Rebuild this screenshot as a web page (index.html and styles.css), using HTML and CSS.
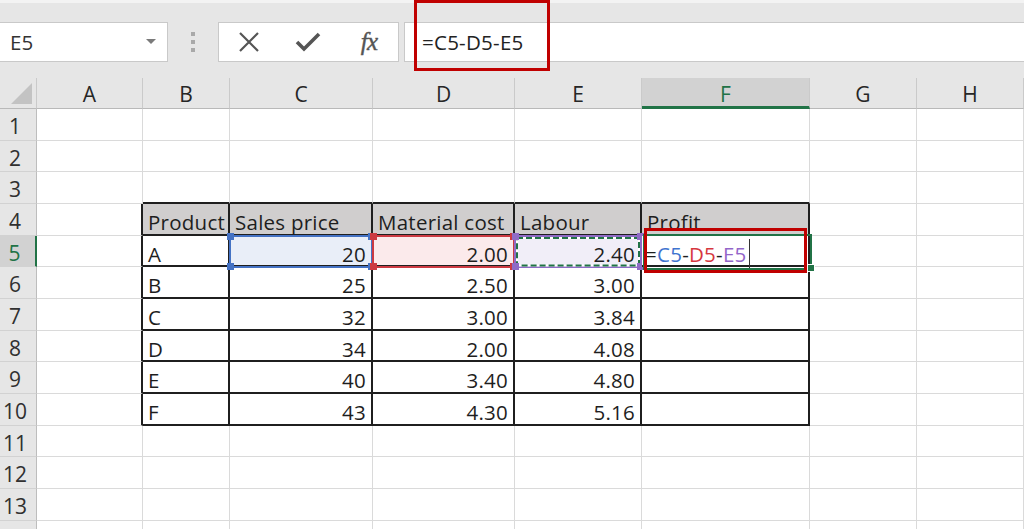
FILE: index.html
```html
<!DOCTYPE html>
<html lang="en">
<head>
<meta charset="utf-8">
<title>Excel formula</title>
<link rel="stylesheet" href="styles.css">
</head>
<body>
<div class="toolbar">
  <div class="namebox">
    <span>E5</span>
    <svg class="dd" width="10" height="6" viewBox="0 0 10 6"><polygon points="0,0 10,0 5,5" fill="#7a7a7a"/></svg>
  </div>
  <div class="grip"><i></i><i></i><i></i></div>
  <div class="fbtns">
    <span class="fb"><svg width="22" height="22" viewBox="0 0 22 22"><path d="M2 2 L20 20 M20 2 L2 20" stroke="#555555" stroke-width="2.2" fill="none"/></svg></span>
    <span class="fb"><svg width="26" height="20" viewBox="0 0 26 20"><path d="M2 10 L9 17 L24 2" stroke="#555555" stroke-width="3.6" fill="none"/></svg></span>
    <span class="fb fx">fx</span>
  </div>
  <div class="fbox">=C5-D5-E5</div>
  <div class="callout"></div>
</div>

<div class="sheet">
  <div class="ch corner"><svg width="36" height="30" viewBox="0 0 36 30"><polygon points="32,5 32,26 11,26" fill="#c3c3c3"/></svg></div>
  <div class="ch">A</div><div class="ch">B</div><div class="ch">C</div><div class="ch">D</div><div class="ch">E</div><div class="ch on">F</div><div class="ch">G</div><div class="ch">H</div>

  <div class="rh">1</div>
  <div class="c"></div><div class="c"></div><div class="c"></div><div class="c"></div><div class="c"></div><div class="c"></div><div class="c"></div><div class="c"></div>

  <div class="rh">2</div>
  <div class="c"></div><div class="c"></div><div class="c"></div><div class="c"></div><div class="c"></div><div class="c"></div><div class="c"></div><div class="c"></div>

  <div class="rh">3</div>
  <div class="c"></div><div class="c ta"></div><div class="c ta"></div><div class="c ta"></div><div class="c ta"></div><div class="c ta"></div><div class="c"></div><div class="c"></div>

  <div class="rh">4</div>
  <div class="c tl"></div>
  <div class="c tt hd">Product</div>
  <div class="c tt hd">Sales price</div>
  <div class="c tt hd">Material cost</div>
  <div class="c tt hd">Labour</div>
  <div class="c tt hd">Profit</div>
  <div class="c"></div><div class="c"></div>

  <div class="rh on">5</div>
  <div class="c tl"></div>
  <div class="c tt">A</div>
  <div class="c tt num sel sel-b">20<b class="ring"><i class="k k1"></i><i class="k k2"></i><i class="k k3"></i><i class="k k4"></i></b></div>
  <div class="c tt num sel sel-r">2.00<b class="ring"><i class="k k1"></i><i class="k k2"></i><i class="k k3"></i><i class="k k4"></i></b></div>
  <div class="c tt num sel sel-p">2.40<b class="ring"><svg class="ants" width="124" height="30" viewBox="0 0 124 30"><rect x="1" y="1" width="122" height="27.6" fill="none" stroke="#ffffff" stroke-width="2"/><rect x="1" y="1" width="122" height="27.6" fill="none" stroke="#217346" stroke-width="2" stroke-dasharray="6 3"/></svg><i class="k k1"></i><i class="k k2"></i><i class="k k3"></i><i class="k k4"></i></b></div>
  <div class="c tt active"><span>=</span><span class="rb">C5</span><span>-</span><span class="rr">D5</span><span>-</span><span class="rp">E5</span><span class="cursor"></span><b class="aring"></b><b class="fill"></b><b class="mark"></b></div>
  <div class="c"></div><div class="c"></div>

  <div class="rh">6</div>
  <div class="c tl"></div><div class="c tt">B</div><div class="c tt num">25</div><div class="c tt num">2.50</div><div class="c tt num">3.00</div><div class="c tt"></div><div class="c"></div><div class="c"></div>

  <div class="rh">7</div>
  <div class="c tl"></div><div class="c tt">C</div><div class="c tt num">32</div><div class="c tt num">3.00</div><div class="c tt num">3.84</div><div class="c tt"></div><div class="c"></div><div class="c"></div>

  <div class="rh">8</div>
  <div class="c tl"></div><div class="c tt">D</div><div class="c tt num">34</div><div class="c tt num">2.00</div><div class="c tt num">4.08</div><div class="c tt"></div><div class="c"></div><div class="c"></div>

  <div class="rh">9</div>
  <div class="c tl"></div><div class="c tt">E</div><div class="c tt num">40</div><div class="c tt num">3.40</div><div class="c tt num">4.80</div><div class="c tt"></div><div class="c"></div><div class="c"></div>

  <div class="rh">10</div>
  <div class="c tl"></div><div class="c tt">F</div><div class="c tt num">43</div><div class="c tt num">4.30</div><div class="c tt num">5.16</div><div class="c tt"></div><div class="c"></div><div class="c"></div>

  <div class="rh">11</div>
  <div class="c"></div><div class="c"></div><div class="c"></div><div class="c"></div><div class="c"></div><div class="c"></div><div class="c"></div><div class="c"></div>

  <div class="rh">12</div>
  <div class="c"></div><div class="c"></div><div class="c"></div><div class="c"></div><div class="c"></div><div class="c"></div><div class="c"></div><div class="c"></div>

  <div class="rh">13</div>
  <div class="c"></div><div class="c"></div><div class="c"></div><div class="c"></div><div class="c"></div><div class="c"></div><div class="c"></div><div class="c"></div>

  <div class="rh"></div>
  <div class="c"></div><div class="c"></div><div class="c"></div><div class="c"></div><div class="c"></div><div class="c"></div><div class="c"></div><div class="c"></div>
</div>
</body>
</html>
```

FILE: styles.css
```css
* { box-sizing: border-box; }

html, body {
  margin: 0;
  height: 100%;
  overflow: hidden;
  background: #ffffff;
}

body {
  font-family: "Open Sans", "Liberation Sans", sans-serif;
  color: #222222;
}

/* ---------- formula bar ---------- */
.toolbar {
  position: relative;
  height: 78px;
  background: #e6e6e6;
  border-top: 3px solid #f3f3f3;
  padding-top: 19px;
  display: flex;
  align-items: flex-start;
}

.namebox {
  width: 168px;
  height: 40px;
  background: #ffffff;
  border: 1px solid #c9c9c9;
  border-left: none;
  display: flex;
  align-items: center;
  justify-content: space-between;
  padding: 0 11px 0 10px;
  font-size: 20.5px;
  color: #333333;
}

.namebox .dd { display: block; }

.grip {
  width: 50px;
  height: 40px;
  display: flex;
  flex-direction: column;
  align-items: center;
  gap: 4px;
  padding-top: 10px;
}

.grip i {
  display: block;
  width: 4px;
  height: 4px;
  background: #a9a9a9;
}

.fbtns {
  width: 181px;
  height: 40px;
  background: #ffffff;
  border: 1px solid #c9c9c9;
  display: flex;
  align-items: center;
}

.fb {
  width: 60px;
  display: flex;
  justify-content: center;
  align-items: center;
}

.fb svg { display: block; }

.fx {
  font-family: "Liberation Serif", "DejaVu Serif", serif;
  font-style: italic;
  font-size: 25px;
  color: #555555;
  letter-spacing: -0.5px;
  padding-left: 2px;
  -webkit-text-stroke: 0.4px #555555;
}

.fbox {
  flex: 1;
  margin-left: 5px;
  margin-right: -2px;
  height: 40px;
  background: #ffffff;
  border: 1px solid #c9c9c9;
  display: flex;
  align-items: center;
  padding-left: 17px;
  font-size: 20.5px;
  letter-spacing: 0.25px;
  color: #222222;
}

.callout {
  position: absolute;
  left: 414px;
  top: -3px;
  width: 136px;
  height: 71px;
  border: 3px solid #c00000;
}

/* ---------- grid ---------- */
.sheet {
  display: grid;
  grid-template-columns: 37px 106px 87px 143px 142px 127px 168px 107px 107px;
  grid-template-rows: 31px repeat(14, 31.67px);
}

.ch {
  background: #e6e6e6;
  border-right: 1px solid #cacaca;
  border-bottom: 1px solid #b9b9b9;
  text-align: center;
  font-size: 21px;
  line-height: 30px;
  padding-top: 1px;
  color: #262626;
}

.ch.corner { padding-top: 0; }
.ch.corner svg { display: block; }

.ch.on {
  background: #d2d2d2;
  color: #217346;
  border-bottom: 3px solid #217346;
}

.rh {
  background: #e6e6e6;
  border-right: 1px solid #bdbdbd;
  border-bottom: 1px solid #d2d2d2;
  text-align: center;
  padding: 2px 6px 0 0;
  font-size: 21px;
  line-height: 30px;
  color: #303030;
}

.rh.on {
  background: #d2d2d2;
  color: #217346;
  border-right: 2px solid #217346;
}

.c {
  border-right: 1px solid #dadada;
  border-bottom: 1px solid #dadada;
  font-size: 20.5px;
  letter-spacing: 0.25px;
  line-height: 30px;
  padding: 3px 5px 0 5px;
  white-space: nowrap;
  color: #1e1e1e;
}

.ta { border-bottom: 2px solid #1f1f1f; }
.tl { border-right: 2px solid #1f1f1f; }
.tt {
  border-right: 2px solid #1f1f1f;
  border-bottom: 2px solid #1f1f1f;
}
.hd { background: #d0cece; }
.num { text-align: right; }

/* ---------- reference highlights ---------- */
.sel { position: relative; }
.sel-b { background: #e9eef8; --ring: #4472c4; }
.sel-r { background: #fbeaeb; --ring: #cc3a42; }
.sel-p { background: #f1eef8; --ring: #8f6bc6; }

.ring {
  position: absolute;
  top: -1px;
  left: -1px;
  right: -2px;
  bottom: -3px;
  border: 2px solid var(--ring);
}

.ants {
  position: absolute;
  left: 0;
  top: 0;
  overflow: visible;
}

.k {
  position: absolute;
  width: 7px;
  height: 7px;
  background: var(--ring);
}
.k1 { left: -4px; top: -4px; }
.k2 { right: -4px; top: -4px; }
.k3 { left: -4px; bottom: -4px; }
.k4 { right: -4px; bottom: -4px; }

/* ---------- active cell ---------- */
.active {
  position: relative;
  padding-left: 3px;
  background: #ffffff;
}

.rb { color: #3f74cf; }
.rr { color: #d6373f; }
.rp { color: #9366c9; }

.cursor {
  display: inline-block;
  width: 1px;
  height: 30px;
  margin-left: 2px;
  vertical-align: top;
  background: #333333;
}

.aring {
  position: absolute;
  left: 1px;
  right: -4px;
  top: -2px;
  bottom: -5px;
  border: 2px solid #217346;
}

.fill {
  position: absolute;
  right: -7px;
  bottom: -7px;
  width: 8px;
  height: 8px;
  background: #217346;
  border: 1px solid #ffffff;
}

.mark {
  position: absolute;
  left: 2px;
  right: 1px;
  top: -8px;
  bottom: -8px;
  border: 3px solid #c00000;
}
```
